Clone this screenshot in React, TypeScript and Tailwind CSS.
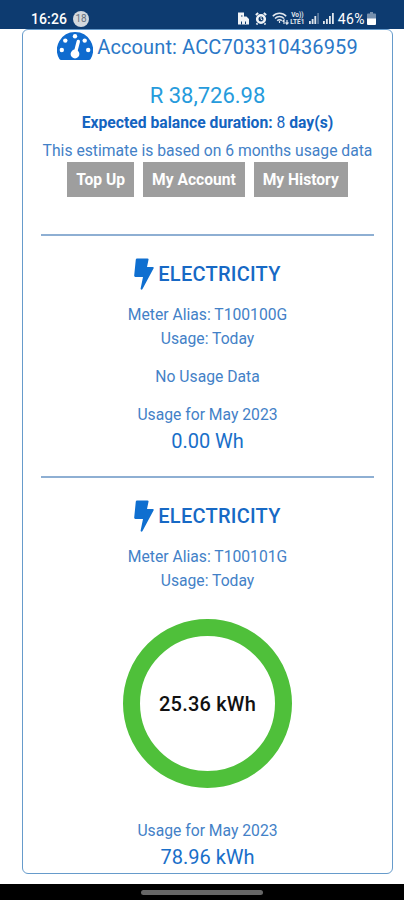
import type { ReactNode } from "react";

const StatusBar = () => (
  <header className="flex h-[29px] shrink-0 items-center bg-[#0d3b70] pl-[31px] pr-7 pt-2 text-white">
    <span className="text-[14px] font-medium leading-5 tracking-[0.1px]">16:26</span>
    <span className="ml-[6px] flex h-4 w-4 items-center justify-center rounded-full bg-[#d3d8dd] text-[10px] leading-none text-[#66707c]">
      18
    </span>
    <div className="ml-auto flex items-center">
      {/* Building */}
      <svg className="mr-[6px] h-[13px] w-[12px]" viewBox="0 0 12 13" fill="none">
        <path d="M1 .5h6v4h2.500L12 7v5.500H1z" fill="#f1f4f7" />
        <path d="M4.500 12.500V9.500M8.500 12V9.500" stroke="#0d3b70" strokeWidth="1" />
        <path d="M4 4h1.500" stroke="#0d3b70" strokeWidth="1.200" />
      </svg>
      {/* Alarm */}
      <svg className="mr-[5px] h-[13px] w-[12px]" viewBox="0 0 12 13" fill="none" stroke="#f1f4f7">
        <circle cx="6" cy="7" r="3.800" strokeWidth="2.600" />
        <path d="M.8 3l2.400-2M11.200 3L8.800 1M2.500 11.300l-1 1.200M9.500 11.300l1 1.200" strokeWidth="1.800" />
        <path d="M6 5v2.300l1.500.7" strokeWidth="1" />
      </svg>
      {/* Wifi */}
      <svg className="mr-[1px] h-[13px] w-[17px]" viewBox="0 0 17 13" fill="none" stroke="#e0e6ed" strokeWidth="1.500">
        <path d="M.8 4.200C4.500.2 10.500.2 14.200 4.200M3 6.500c2.500-2.700 6.500-2.700 9 0M5.200 8.700c1.300-1.400 3.300-1.400 4.600 0" />
        <path d="M7.500 9v2M12 12V8l-1.500 1.500M15 8v4l1.500-1.500M15 12l-1.500-1.500" strokeWidth="1.200" />
      </svg>
      <span className="mr-[4px] flex w-[15px] flex-col items-center text-[6.500px] font-bold leading-[7px] text-[#e0e6ed]">
        <span>Vo))</span>
        <span>LTE1</span>
      </span>
      <svg className="mr-[4px] h-[11px] w-[10px]" viewBox="0 0 10 11" fill="#e0e6ed">
        <path d="M0 8h1.800v3H0zM2.700 6h1.800v5H2.700zM5.400 3h1.800v8H5.400z" />
        <path d="M8.200 0H10v11H8.200z" opacity=".35" />
      </svg>
      <svg className="mr-[4px] h-[11px] w-[11px]" viewBox="0 0 11 11" fill="#e0e6ed">
        <path d="M0 8h1.800v3H0zM3 6h1.800v5H3zM6 3h1.800v8H6zM9 0h1.800v11H9z" />
      </svg>
      <span className="text-[14px] leading-5 tracking-[0.4px]">46%</span>
      <svg className="ml-[2px] h-[13px] w-[9px]" viewBox="0 0 9 13">
        <path d="M3 0h3v1.500h2a1 1 0 0 1 1 1V7H0V2.500a1 1 0 0 1 1-1h2z" fill="#7690ae" />
        <path d="M0 6.500h9V12a1 1 0 0 1-1 1H1a1 1 0 0 1-1-1z" fill="#fff" />
      </svg>
    </div>
  </header>
);

const GaugeIcon = () => (
  <svg className="mb-[2px] h-[28px] w-[36px] shrink-0" viewBox="0 0 36 28">
    <path
      d="M18 0a18 18 0 0 1 15.600 27q-.6 1-1.700 1H4.100q-1.100 0-1.700-1A18 18 0 0 1 18 0z"
      fill="#0f6bcf"
    />
    <g fill="#fff">
      <circle cx="18" cy="4.200" r="2.200" />
      <circle cx="8.300" cy="8.600" r="2.200" />
      <circle cx="27.700" cy="8.600" r="2.200" />
      <circle cx="4.800" cy="18" r="2.200" />
      <circle cx="31.200" cy="18" r="2.200" />
      <circle cx="18" cy="22" r="4.400" />
    </g>
    <path d="M18.300 21L21.300 9.500" stroke="#fff" strokeWidth="3.400" strokeLinecap="round" />
  </svg>
);

const BoltIcon = () => (
  <svg className="h-[32px] w-[20px] shrink-0" viewBox="0 0 20 32">
    <path
      d="M3 .5h10.500q1.300 0 1 1.200L13 9h5.700q1.600 0 .8 1.500L8.500 31q-.8 1.200-1.700.3-.3-.4-.1-1L9 19H1.300Q0 19 .2 17.500L1.800 1.600Q2 .5 3 .5z"
      fill="#0f6fd0"
    />
  </svg>
);

const ActionButton = ({ children }: { children: string }) => (
  <button className="h-[35px] bg-[#9e9e9e] px-[9px] text-[15.6px] font-bold leading-6 text-white">{children}</button>
);

type MeterProps = { alias: string; total: string; children: ReactNode };

const Meter = ({ alias, total, children }: MeterProps) => (
  <section className="flex flex-col items-center border-t-2 border-[#8eafd3] pt-[22px]">
    <div className="flex h-[32px] items-center gap-[4px]">
      <BoltIcon />
      <h2 className="text-[20px] font-medium leading-8 tracking-[0.25px] text-[#1769c5]">ELECTRICITY</h2>
    </div>
    <p className="mt-[13px] leading-6">Meter Alias: {alias}</p>
    <p className="leading-6">Usage: Today</p>
    {children}
    <p className="leading-6">Usage for May 2023</p>
    <p className="text-[20px] leading-7 text-[#196fc9]">{total}</p>
  </section>
);

const App = () => {
  return (
    <div className="flex h-[900px] w-[404px] flex-col overflow-hidden bg-white font-['Roboto',sans-serif] text-[15.7px] text-[#4381c7]">
      <StatusBar />
      <main className="ml-[22px] mr-[11px] h-[845px] rounded-[6px] border border-[#669bcb] px-[18px]">
        <div className="flex h-[34px] items-center justify-center gap-[4px]">
          <GaugeIcon />
          <h1 className="whitespace-nowrap text-[20px] leading-6 tracking-[0.12px] text-[#2b78c7]">
            Account: ACC703310436959
          </h1>
        </div>
        <p className="mt-[16px] text-center text-[22px] leading-8 text-[#269bdc]">R 38,726.98</p>
        <p className="-mt-px text-center font-bold leading-6 text-[#1464c0]">
          Expected balance duration: <span className="font-normal">8</span> day(s)
        </p>
        <p className="mt-[4px] whitespace-nowrap text-center leading-6">This estimate is based on 6 months usage data</p>
        <div className="-mt-px mb-[37px] flex justify-center gap-[9px]">
          <ActionButton>Top Up</ActionButton>
          <ActionButton>My Account</ActionButton>
          <ActionButton>My History</ActionButton>
        </div>

        <Meter alias="T100100G" total="0.00 Wh">
          <p className="my-[14px] leading-6">No Usage Data</p>
        </Meter>
        <div className="h-[21px]" />
        <Meter alias="T100101G" total="78.96 kWh">
          <div className="mb-[31px] mt-[26px] flex h-[169px] w-[169px] items-center justify-center rounded-full border-[17px] border-[#4fc03a] text-[20px] font-medium tracking-[0.2px] text-[#111]">
            25.36 kWh
          </div>
        </Meter>
      </main>
      <footer className="mt-auto flex h-4 shrink-0 items-center justify-center bg-black">
        <div className="h-[5px] w-[122px] rounded-full bg-[#666]" />
      </footer>
    </div>
  );
};

export default App;
